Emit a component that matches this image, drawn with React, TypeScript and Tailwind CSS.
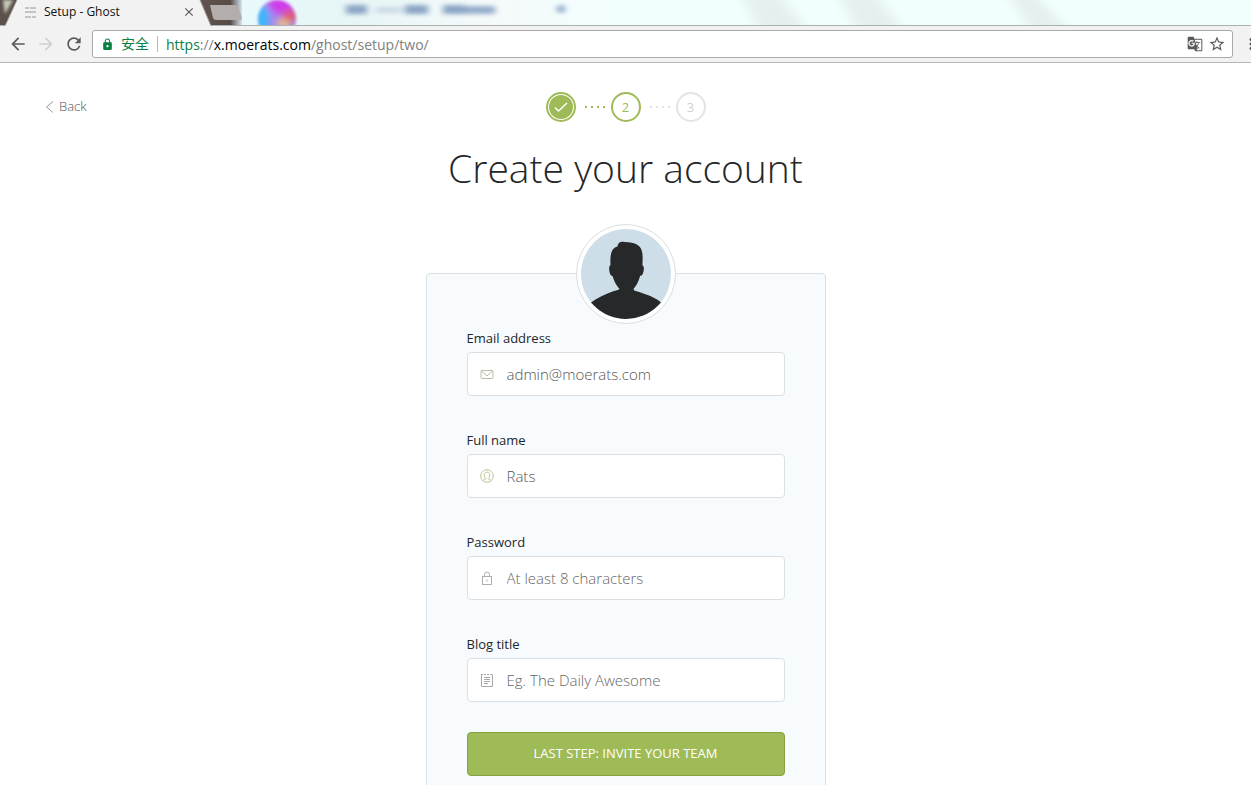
import { useState } from "react";
import type { ReactNode } from "react";
import { MdArrowBack, MdArrowForward, MdClose, MdGTranslate, MdLock, MdMoreVert, MdRefresh, MdStarBorder } from "react-icons/md";

const TabStripBackdrop = () => (
    <svg className="absolute inset-0 h-full w-full" aria-hidden="true">
        <defs>
            <linearGradient id="sky" x1="0" x2="1" y1="0" y2="0">
                <stop offset="0" stopColor="#e9fafd" />
                <stop offset="0.08" stopColor="#e6f5f5" />
                <stop offset="0.2" stopColor="#f5f9fa" />
                <stop offset="0.3" stopColor="#f2ffff" />
                <stop offset="0.8" stopColor="#f2ffff" />
                <stop offset="1" stopColor="#ebf9f9" />
            </linearGradient>
            <linearGradient id="wood" x1="0" x2="1" y1="0" y2="0">
                <stop offset="0" stopColor="#62554f" />
                <stop offset="0.75" stopColor="#574b46" />
                <stop offset="1" stopColor="#d5e5ef" />
            </linearGradient>
            <filter id="streak" x="-50%" y="-200%" width="200%" height="500%">
                <feGaussianBlur stdDeviation="7 2" />
            </filter>
            <filter id="soft" x="-50%" y="-100%" width="200%" height="300%">
                <feGaussianBlur stdDeviation="3" />
            </filter>
            <filter id="softText" x="-50%" y="-100%" width="200%" height="300%">
                <feGaussianBlur stdDeviation="3 2" />
            </filter>
            <filter id="softEdge" x="-20%" y="-20%" width="140%" height="140%">
                <feGaussianBlur stdDeviation="1.500" />
            </filter>
            <clipPath id="orb">
                <circle cx="277" cy="19" r="19" />
            </clipPath>
        </defs>
        <rect x="240" width="100%" height="26" fill="url(#sky)" />
        <g fill="#e4f0ef" filter="url(#streak)">
            <path d="M740-10h35l38 46h-52z" />
            <path d="M835-10h36l38 46h-48z" />
            <path d="M1005-10h25l45 46h-40z" />
        </g>
        <rect x="195" width="47" height="26" fill="url(#wood)" />
        <rect width="20" height="26" fill="#5c514b" />
        <path d="M3 0h10L5 14z" fill="#c6c9b8" filter="url(#softEdge)" />
        <g filter="url(#softEdge)">
            <g clipPath="url(#orb)">
                <rect x="255" width="45" height="32" fill="#a783ee" />
                <g filter="url(#soft)">
                    <rect x="252" y="5" width="17" height="30" fill="#3eb5fa" />
                    <ellipse cx="280" cy="5" rx="13" ry="8" fill="#d13bea" />
                    <ellipse cx="290" cy="16" rx="8" ry="6" fill="#e3566e" />
                    <ellipse cx="283" cy="24" rx="7" ry="4" fill="#f2ce7c" />
                </g>
            </g>
        </g>
        <g fill="#8ba5c5" filter="url(#softText)">
            <rect x="346" y="5" width="21" height="9" />
            <rect x="376" y="7" width="26" height="6" opacity="0.35" />
            <rect x="405" y="5" width="23" height="9" />
            <rect x="443" y="5" width="22" height="9" />
            <rect x="465" y="6" width="30" height="8" opacity="0.9" />
            <circle cx="561" cy="9" r="4" />
        </g>
        <path d="M210 5h25q2 0 3 2l4 11q0 2-2 2h-24q-2 0-3-2z" fill="#b3adab" />
        <path d="M0 25.500h6M211 25.500H4000" stroke="#abafaf" />
        <path d="M5 26L17 0H200L211 26z" fill="#f2f2f2" />
        <path d="M5 26L17 0M200 0L211 26" stroke="#a5a3a0" fill="none" />
    </svg>
);

const GhostMark = () => (
    <svg width="11" height="11" viewBox="0 0 11 11" fill="#c4c4c4" aria-hidden="true">
        <path d="M0 0h4v2H0zM5 0h6v2H5zM0 4h11v2H0zM0 9h6v2H0zM7 9h4v2H7z" />
    </svg>
);

const MailIcon = () => (
    <svg width="14" height="14" viewBox="0 0 14 14" fill="none" stroke="#b5bca5" aria-hidden="true">
        <rect x="1" y="3.500" width="12" height="8" rx="1" />
        <path d="M1.500 4L7 9l5.500-5" />
    </svg>
);

const UserIcon = () => (
    <svg width="14" height="14" viewBox="0 0 14 14" fill="none" stroke="#bcc391" aria-hidden="true">
        <circle cx="7" cy="7" r="6.300" />
        <path d="M3 11.500c1-1.200 2.800-.8 2.800-2C4.500 8.500 4 6.500 4.500 4.500 5 2.600 9 2.600 9.500 4.500c.5 2 0 4-1.300 5 0 1.200 1.800.8 2.800 2" />
    </svg>
);

const LockIcon = () => (
    <svg width="14" height="14" viewBox="0 0 14 14" fill="none" stroke="#adadb2" aria-hidden="true">
        <rect x="2.500" y="5.500" width="9" height="8" />
        <path d="M4.500 5.500V3.500a2.500 2.500 0 0 1 5 0v2M7 8.500v2" />
    </svg>
);

const NoteIcon = () => (
    <svg width="14" height="14" viewBox="0 0 14 14" fill="none" stroke="#a4a8ab" aria-hidden="true">
        <path d="M1.500 1.500v12h11v-12M4 4.500h6M4 6.500h6M4 8.500h6M4 10.500h4" />
        <path d="M1 1.500h12" strokeDasharray="2 1" />
    </svg>
);

const Avatar = () => (
    <div className="relative z-10 mx-auto size-[100px] rounded-full border border-[#d9dfe1] bg-white p-1">
        <svg className="size-full" viewBox="0 0 90 90" role="img" aria-label="Profile picture">
            <clipPath id="avatar">
                <circle cx="45" cy="45" r="45" />
            </clipPath>
            <g clipPath="url(#avatar)">
                <rect width="90" height="90" fill="#cddee8" />
                <path
                    d="M29.500 36C29 28 29.500 19 36.500 17.500c.5-4 3-5 7-4.600 11 .2 17 3.600 17.700 10.600.8 5 .3 9 .2 12.800 2 1 1.800 5 .4 8.400-.6 1.600-1.400 2-2.600 2C57.500 53 55 57 52.500 60c0 1.500 2 2 5 2.800C67 66 75 69 80 73.500V90H10V73.500C16 69 24 65 33 62c3-.8 5-1 5.500-2C35 56 33 52 31.500 47c-1.300 0-2-.8-2.700-3-1-3.500-1-7 .7-8z"
                    fill="#26282a"
                />
            </g>
        </svg>
    </div>
);

const Dots = ({ className }: { className: string }) => (
    <span className={`flex w-[35px] justify-center gap-1 pl-1 ${className}`}>
        {[0, 1, 2, 3].map((i) => (
            <span key={i} className="size-[2px] bg-current" />
        ))}
    </span>
);

const Steps = () => (
    <nav aria-label="Setup steps" className="flex items-center text-[13px]">
        <a href="#one" aria-label="Step 1, done" className="flex size-[30px] items-center justify-center rounded-full border-2 border-[#9fbb58]">
            <span className="flex size-6 items-center justify-center rounded-full bg-[#9fbb58]">
                <svg width="14" height="12" viewBox="0 0 14 12" fill="none" stroke="white" strokeWidth="1.500" aria-hidden="true">
                    <path d="M1 6.500l3.500 3.500L13 2" />
                </svg>
            </span>
        </a>
        <Dots className="text-[#9fbb58]" />
        <a href="#two" aria-current="step" className="flex size-[30px] items-center justify-center rounded-full border-2 border-[#9fbb58] pt-[2px] text-[#9fbb58]">
            2
        </a>
        <Dots className="text-[#e3e3e3]" />
        <span className="flex size-[30px] items-center justify-center rounded-full border-2 border-[#e3e3e3] pt-[2px] text-[#cfcfcf]">3</span>
    </nav>
);

interface FieldProps {
    id: string;
    label: string;
    icon: ReactNode;
    type?: string;
    placeholder?: string;
    value: string;
    onChange: (value: string) => void;
}

const Field = ({ id, label, icon, type = "text", placeholder, value, onChange }: FieldProps) => (
    <div>
        <label htmlFor={id} className="mb-1 block text-[13px] leading-5 text-[#242628]">
            {label}
        </label>
        <div className="flex h-11 items-center gap-[13px] rounded border border-[#dae1e3] bg-white px-3">
            {icon}
            <input
                id={id}
                type={type}
                placeholder={placeholder}
                value={value}
                onChange={(e) => onChange(e.target.value)}
                className="min-w-0 flex-1 bg-transparent text-[15px] font-light text-[#555] outline-none placeholder:text-[#666]"
            />
        </div>
    </div>
);

export default function App() {
    const [email, setEmail] = useState("admin@moerats.com");
    const [name, setName] = useState("Rats");
    const [password, setPassword] = useState("");
    const [blogTitle, setBlogTitle] = useState("");

    return (
        <div className="flex h-screen flex-col overflow-hidden bg-white font-['Open_Sans','Noto_Sans_CJK_SC',sans-serif]">
            <header className="shrink-0">
                <div className="relative h-[26px]">
                    <TabStripBackdrop />
                    <div className="relative flex h-6 w-[196px] items-center gap-2 pl-[25px] text-[12px] text-[#111]">
                        <GhostMark />
                        <span className="flex-1">Setup - Ghost</span>
                        <button aria-label="Close tab" className="text-[#5a5a5a]">
                            <MdClose size={14} />
                        </button>
                    </div>
                </div>

                <div className="flex h-[37px] items-center overflow-hidden border-b border-[#b6b6b6] bg-[#f2f2f2] pl-2 text-[#5a5a5a]">
                    <button aria-label="Back" className="w-7">
                        <MdArrowBack size={20} />
                    </button>
                    <button aria-label="Forward" className="w-7 text-[#d0d0d0]">
                        <MdArrowForward size={20} />
                    </button>
                    <button aria-label="Reload" className="w-7">
                        <MdRefresh size={20} />
                    </button>
                    <div className="flex h-7 flex-1 items-center rounded-[3px] border border-[#a9a9a9] bg-white pr-[6px] pl-2 text-[14px]">
                        <MdLock size={13} className="text-[#0b8043]" />
                        <span className="ml-[7px] border-r border-[#b5b5b5] pr-2 leading-4 text-[#0b8043]">安全</span>
                        <div role="textbox" aria-label="Address" tabIndex={0} className="ml-2 flex-1 text-[#808080]">
                            <span className="text-[#0b8043]">https</span>://<span className="text-black">x.moerats.com</span>/ghost/setup/two/
                        </div>
                        <button aria-label="Translate this page" className="mr-[5px]">
                            <MdGTranslate size={16} />
                        </button>
                        <button aria-label="Bookmark this page">
                            <MdStarBorder size={18} />
                        </button>
                    </div>
                    <button aria-label="Menu" className="w-[18px] shrink-0 pl-[9px]">
                        <MdMoreVert size={18} />
                    </button>
                </div>
            </header>

            <main className="flex-1 overflow-hidden pt-[29px]">
                <div className="grid grid-cols-[1fr_auto_1fr] items-center px-[45px]">
                    <a href="#back" className="flex items-center gap-[5px] text-[13px] font-light text-[#555]">
                        <svg width="9" height="12" viewBox="0 0 9 12" fill="none" stroke="#999" aria-hidden="true">
                            <path d="M8 .500L1.500 6 8 11.500" />
                        </svg>
                        Back
                    </a>
                    <Steps />
                </div>

                <h1 className="mt-[22px] text-center text-[39px] leading-[48px] font-light text-[#242628]">Create your account</h1>

                <div className="mx-auto mt-8 w-[400px]">
                    <Avatar />
                    <form
                        onSubmit={(e) => e.preventDefault()}
                        className="-mt-[51px] rounded border border-[#dae1e3] bg-[#f7fbfe] px-10 pt-[54px] pb-10"
                    >
                        <div className="grid gap-[34px]">
                            <Field id="email" type="email" label="Email address" icon={<MailIcon />} value={email} onChange={setEmail} />
                            <Field id="name" label="Full name" icon={<UserIcon />} value={name} onChange={setName} />
                            <Field
                                id="password"
                                type="password"
                                label="Password"
                                placeholder="At least 8 characters"
                                icon={<LockIcon />}
                                value={password}
                                onChange={setPassword}
                            />
                            <Field
                                id="blog-title"
                                label="Blog title"
                                placeholder="Eg. The Daily Awesome"
                                icon={<NoteIcon />}
                                value={blogTitle}
                                onChange={setBlogTitle}
                            />
                        </div>
                        <button type="submit" className="mt-[30px] h-11 w-full rounded border border-[#86a240] bg-[#9fbb58] text-[13px] text-white uppercase">
                            Last step: Invite your team
                        </button>
                    </form>
                </div>
            </main>
        </div>
    );
}
